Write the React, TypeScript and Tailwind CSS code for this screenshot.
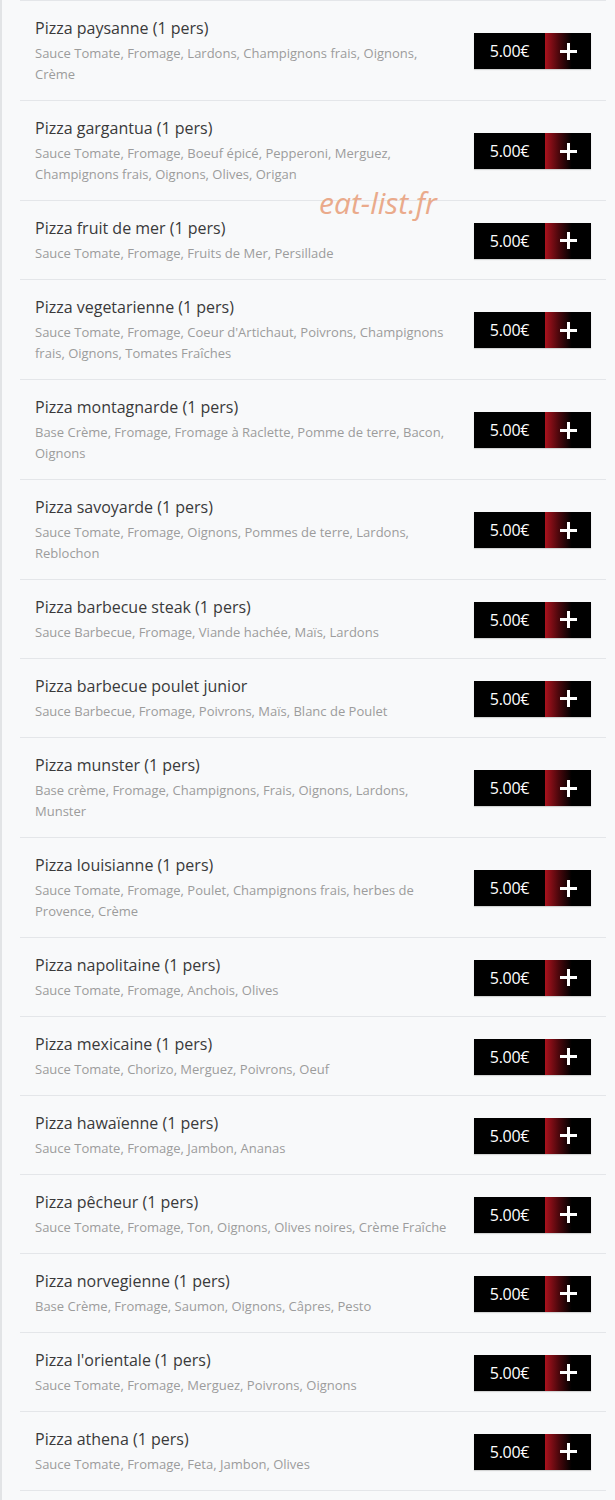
import React from "react";

const items: [string, string][] = [
  ["Pizza paysanne (1 pers)", "Sauce Tomate, Fromage, Lardons, Champignons frais, Oignons, Crème"],
  ["Pizza gargantua (1 pers)", "Sauce Tomate, Fromage, Boeuf épicé, Pepperoni, Merguez, Champignons frais, Oignons, Olives, Origan"],
  ["Pizza fruit de mer (1 pers)", "Sauce Tomate, Fromage, Fruits de Mer, Persillade"],
  ["Pizza vegetarienne (1 pers)", "Sauce Tomate, Fromage, Coeur d'Artichaut, Poivrons, Champignons frais, Oignons, Tomates Fraîches"],
  ["Pizza montagnarde (1 pers)", "Base Crème, Fromage, Fromage à Raclette, Pomme de terre, Bacon, Oignons"],
  ["Pizza savoyarde (1 pers)", "Sauce Tomate, Fromage, Oignons, Pommes de terre, Lardons, Reblochon"],
  ["Pizza barbecue steak (1 pers)", "Sauce Barbecue, Fromage, Viande hachée, Maïs, Lardons"],
  ["Pizza barbecue poulet junior", "Sauce Barbecue, Fromage, Poivrons, Maïs, Blanc de Poulet"],
  ["Pizza munster (1 pers)", "Base crème, Fromage, Champignons, Frais, Oignons, Lardons, Munster"],
  ["Pizza louisianne (1 pers)", "Sauce Tomate, Fromage, Poulet, Champignons frais, herbes de Provence, Crème"],
  ["Pizza napolitaine (1 pers)", "Sauce Tomate, Fromage, Anchois, Olives"],
  ["Pizza mexicaine (1 pers)", "Sauce Tomate, Chorizo, Merguez, Poivrons, Oeuf"],
  ["Pizza hawaïenne (1 pers)", "Sauce Tomate, Fromage, Jambon, Ananas"],
  ["Pizza pêcheur (1 pers)", "Sauce Tomate, Fromage, Ton, Oignons, Olives noires, Crème Fraîche"],
  ["Pizza norvegienne (1 pers)", "Base Crème, Fromage, Saumon, Oignons, Câpres, Pesto"],
  ["Pizza l'orientale (1 pers)", "Sauce Tomate, Fromage, Merguez, Poivrons, Oignons"],
  ["Pizza athena (1 pers)", "Sauce Tomate, Fromage, Feta, Jambon, Olives"],
];

const sans = { fontFamily: '"Open Sans", "Noto Sans", sans-serif' };

function Row({ title, desc }: { title: string; desc: string }) {
  return (
    <div className="flex items-center border-b border-[#e4e6e9] pl-[15px] pr-[15px] pt-[16px] pb-[15px]">
      <div className="flex-1 min-w-0">
        <div className="text-[16px] leading-[22px] text-[#3a3a3a]" style={sans}>
          {title}
        </div>
        <div className="text-[13px] leading-[21px] text-[#9c9c9c] mt-[4px] max-w-[412px]" style={sans}>
          {desc}
        </div>
      </div>
      <div className="flex h-[36px] shrink-0 shadow-[0_1px_1px_rgba(0,0,0,0.15)]">
        <div
          className="w-[71px] bg-black text-white text-[16px] flex items-center justify-center tracking-[-0.3px]"
          style={sans}
        >
          5.00€
        </div>
        <div className="w-[46px] flex items-center justify-center bg-[linear-gradient(to_right,#ab121d_0%,#4a070c_30%,#000_58%)]">
          <svg width="19" height="19" viewBox="0 0 19 19">
            <path d="M9.5 1v17M1 9.5h17" stroke="#fff" strokeWidth="3" strokeLinecap="butt" />
          </svg>
        </div>
      </div>
    </div>
  );
}

export default function App() {
  return (
    <div className="relative w-[615px] min-h-[1500px] bg-[#f8f9fa] border-l-2 border-[#e2e4e6]">
      <div className="ml-[18px] mr-[9px] border-t border-[#e4e6e9]">
        {items.map(([t, d]) => (
          <Row key={t} title={t} desc={d} />
        ))}
      </div>
      <div
        className="absolute left-[317px] top-[180px] text-[30px] italic text-[#e9a27f] opacity-90 pointer-events-none"
        style={sans}
      >
        eat-list.fr
      </div>
    </div>
  );
}
